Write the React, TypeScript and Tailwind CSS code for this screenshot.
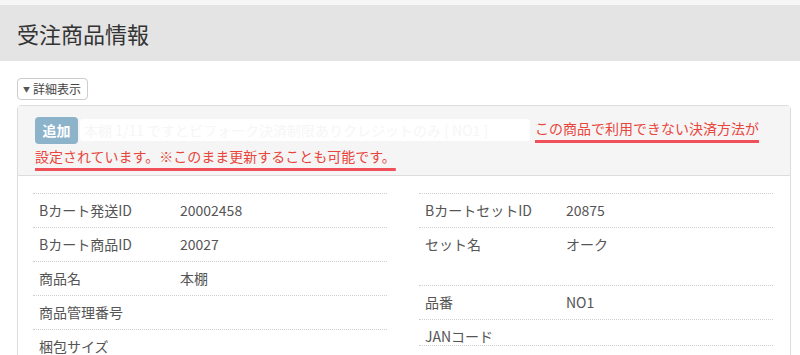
const font = { fontFamily: '"Noto Sans CJK JP", "Noto Sans", sans-serif' };

type Row = { label: string; value?: string; tall?: boolean; short?: boolean };

const leftRows: Row[] = [
  { label: "Bカート発送ID", value: "20002458" },
  { label: "Bカート商品ID", value: "20027" },
  { label: "商品名", value: "本棚" },
  { label: "商品管理番号" },
  { label: "梱包サイズ" },
];

const rightRows: Row[] = [
  { label: "BカートセットID", value: "20875" },
  { label: "セット名", value: "オーク", tall: true },
  { label: "品番", value: "NO1" },
  { label: "JANコード", short: true },
  { label: "" },
];

function InfoRow({ row }: { row: Row }) {
  const h = row.tall ? "h-[58px] items-start pt-[5px]" : row.short ? "h-[26px] items-start pt-[5px]" : "h-[34px] items-center";
  return (
    <div className={`flex border-t border-dotted border-[#cfcfcf] pl-[6px] text-[14px] leading-[22px] text-[#555] ${h}`}>
      <div className="w-[141px] shrink-0">{row.label}</div>
      <div>{row.value}</div>
    </div>
  );
}

export default function App() {
  return (
    <div className="h-[355px] w-[800px] overflow-hidden bg-white" style={font}>
      <div className="h-[5px] bg-[#f6f6f6]" />
      <div className="flex h-[56px] items-center bg-[#e4e4e4] px-[17px]">
        <h1 className="text-[22px] leading-none text-[#333]">受注商品情報</h1>
      </div>

      <div className="pl-[17px] pr-[9px] pt-[17px]">
        <button
          type="button"
          className="flex h-[22px] items-center gap-[3px] rounded-[4px] border border-[#ccc] bg-white pl-[5px] pr-[6px] text-[12px] leading-none text-[#444]"
        >
          <span className="text-[7px] text-[#555]">▼</span>
          詳細表示
        </button>

        <div className="mt-[5px] rounded-t-[4px] border border-[#ddd]">
          <div className="border-b border-[#ddd] bg-[#f5f5f5] px-[17px] pb-[6px] pt-[10px] text-[14px] leading-[25px]">
            <span className="inline-flex h-[27px] w-[43px] items-center justify-center rounded-[4px] bg-[#8db3cb] align-middle font-bold text-white">
              追加
            </span>
            <span className="ml-[2px] inline-block h-[22px] w-[450px] overflow-hidden rounded-[3px] bg-white pl-[4px] align-middle text-[14px] leading-[22px] text-[#f6f6f6]">
              本棚 1/11 ですとビフォーク決済制限ありクレジットのみ [ NO1 ]
            </span>
            <span className="ml-[5px] text-[#e8453c] underline decoration-[#f0505a] decoration-[3px] underline-offset-[6px]">
              この商品で利用できない決済方法が
            </span>
            <br />
            <span className="text-[#e8453c] underline decoration-[#f0505a] decoration-[3px] underline-offset-[6px]">
              設定されています。※このまま更新することも可能です。
            </span>
          </div>

          <div className="grid grid-cols-2 gap-x-[32px] pl-[15px] pr-[17px] pt-[17px]">
            <div>
              {leftRows.map((r) => (
                <InfoRow key={r.label} row={r} />
              ))}
            </div>
            <div>
              {rightRows.map((r, i) => (
                <InfoRow key={i} row={r} />
              ))}
            </div>
          </div>
        </div>
      </div>
    </div>
  );
}
